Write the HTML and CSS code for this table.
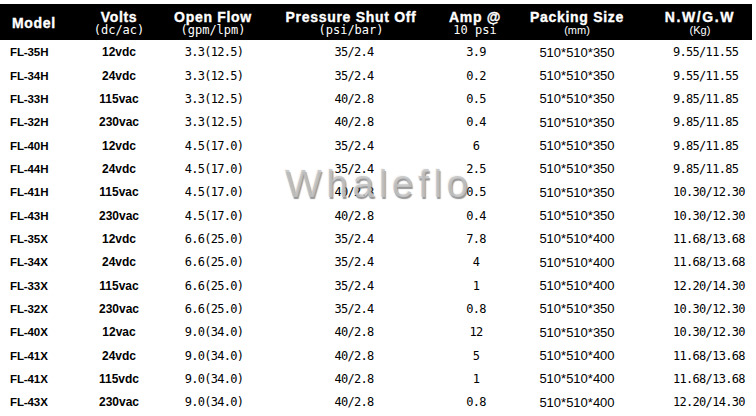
FILE: index.html
```html
<!DOCTYPE html>
<html>
<head>
<meta charset="utf-8">
<link rel="stylesheet" href="styles.css">
</head>
<body>
<div class="sheet">
  <div class="grid">
    <div class="th model"><span class="h1">Model</span></div>
    <div class="th"><span class="h1">Volts</span><span class="h2">(dc/ac)</span></div>
    <div class="th"><span class="h1">Open Flow</span><span class="h2">(gpm/lpm)</span></div>
    <div class="th"><span class="h1">Pressure Shut Off</span><span class="h2">(psi/bar)</span></div>
    <div class="th"><span class="h1">Amp @</span><span class="h2">10 psi</span></div>
    <div class="th"><span class="h1">Packing Size</span><span class="h2 sm">(mm)</span></div>
    <div class="th"><span class="h1 wide">N.W/G.W</span><span class="h2 sm">(Kg)</span></div>

    <div class="td c-model">FL-35H</div><div class="td c-volt">12vdc</div><div class="td c-flow">3.3(12.5)</div><div class="td c-pres">35/2.4</div><div class="td c-amp">3.9</div><div class="td c-pack">510*510*350</div><div class="td c-nw">9.55/11.55</div>
    <div class="td c-model">FL-34H</div><div class="td c-volt">24vdc</div><div class="td c-flow">3.3(12.5)</div><div class="td c-pres">35/2.4</div><div class="td c-amp">0.2</div><div class="td c-pack">510*510*350</div><div class="td c-nw">9.55/11.55</div>
    <div class="td c-model">FL-33H</div><div class="td c-volt">115vac</div><div class="td c-flow">3.3(12.5)</div><div class="td c-pres">40/2.8</div><div class="td c-amp">0.5</div><div class="td c-pack">510*510*350</div><div class="td c-nw">9.85/11.85</div>
    <div class="td c-model">FL-32H</div><div class="td c-volt">230vac</div><div class="td c-flow">3.3(12.5)</div><div class="td c-pres">40/2.8</div><div class="td c-amp">0.4</div><div class="td c-pack">510*510*350</div><div class="td c-nw">9.85/11.85</div>
    <div class="td c-model">FL-40H</div><div class="td c-volt">12vdc</div><div class="td c-flow">4.5(17.0)</div><div class="td c-pres">35/2.4</div><div class="td c-amp">6</div><div class="td c-pack">510*510*350</div><div class="td c-nw">9.85/11.85</div>
    <div class="td c-model">FL-44H</div><div class="td c-volt">24vdc</div><div class="td c-flow">4.5(17.0)</div><div class="td c-pres">35/2.4</div><div class="td c-amp">2.5</div><div class="td c-pack">510*510*350</div><div class="td c-nw">9.85/11.85</div>
    <div class="td c-model">FL-41H</div><div class="td c-volt">115vac</div><div class="td c-flow">4.5(17.0)</div><div class="td c-pres">40/2.8</div><div class="td c-amp">0.5</div><div class="td c-pack">510*510*350</div><div class="td c-nw">10.30/12.30</div>
    <div class="td c-model">FL-43H</div><div class="td c-volt">230vac</div><div class="td c-flow">4.5(17.0)</div><div class="td c-pres">40/2.8</div><div class="td c-amp">0.4</div><div class="td c-pack">510*510*350</div><div class="td c-nw">10.30/12.30</div>
    <div class="td c-model">FL-35X</div><div class="td c-volt">12vdc</div><div class="td c-flow">6.6(25.0)</div><div class="td c-pres">35/2.4</div><div class="td c-amp">7.8</div><div class="td c-pack">510*510*400</div><div class="td c-nw">11.68/13.68</div>
    <div class="td c-model">FL-34X</div><div class="td c-volt">24vdc</div><div class="td c-flow">6.6(25.0)</div><div class="td c-pres">35/2.4</div><div class="td c-amp">4</div><div class="td c-pack">510*510*400</div><div class="td c-nw">11.68/13.68</div>
    <div class="td c-model">FL-33X</div><div class="td c-volt">115vac</div><div class="td c-flow">6.6(25.0)</div><div class="td c-pres">35/2.4</div><div class="td c-amp">1</div><div class="td c-pack">510*510*400</div><div class="td c-nw">12.20/14.30</div>
    <div class="td c-model">FL-32X</div><div class="td c-volt">230vac</div><div class="td c-flow">6.6(25.0)</div><div class="td c-pres">35/2.4</div><div class="td c-amp">0.8</div><div class="td c-pack">510*510*350</div><div class="td c-nw">10.30/12.30</div>
    <div class="td c-model">FL-40X</div><div class="td c-volt">12vac</div><div class="td c-flow">9.0(34.0)</div><div class="td c-pres">40/2.8</div><div class="td c-amp">12</div><div class="td c-pack">510*510*350</div><div class="td c-nw">10.30/12.30</div>
    <div class="td c-model">FL-41X</div><div class="td c-volt">24vdc</div><div class="td c-flow">9.0(34.0)</div><div class="td c-pres">40/2.8</div><div class="td c-amp">5</div><div class="td c-pack">510*510*400</div><div class="td c-nw">11.68/13.68</div>
    <div class="td c-model">FL-41X</div><div class="td c-volt">115vdc</div><div class="td c-flow">9.0(34.0)</div><div class="td c-pres">40/2.8</div><div class="td c-amp">1</div><div class="td c-pack">510*510*400</div><div class="td c-nw">11.68/13.68</div>
    <div class="td c-model">FL-43X</div><div class="td c-volt">230vac</div><div class="td c-flow">9.0(34.0)</div><div class="td c-pres">40/2.8</div><div class="td c-amp">0.8</div><div class="td c-pack">510*510*400</div><div class="td c-nw">12.20/14.30</div>
  </div>
  <span class="watermark">Whaleflo</span>
</div>
</body>
</html>
```
FILE: styles.css
```css
html, body {
  margin: 0;
  padding: 0;
  background: #fff;
}
body {
  width: 756px;
  height: 416px;
  overflow: hidden;
  font-family: "Liberation Sans", Arial, sans-serif;
  color: #000;
}
.sheet {
  position: relative;
  padding-top: 4px;
}
.grid {
  display: grid;
  grid-template-columns: 70px 98px 90px 186px 62px 142px 104px;
  grid-template-rows: 36px;
  grid-auto-rows: 23.35px;
  width: 752px;
}
.th {
  background: #000;
  color: #fff;
  display: flex;
  flex-direction: column;
  align-items: center;
  justify-content: center;
  padding-top: 3px;
}
.th.model {
  align-items: flex-start;
  padding-left: 12px;
}
.h1 {
  font-weight: bold;
  font-size: 14px;
  line-height: 13px;
  letter-spacing: 0.7px;
  -webkit-text-stroke: 0.35px #fff;
}
.h1.wide {
  letter-spacing: 1.6px;
}
.h2 {
  font-family: "DejaVu Sans Mono", monospace;
  font-size: 12px;
  line-height: 12px;
  letter-spacing: 0;
}
.h2.sm {
  font-family: "Liberation Sans", Arial, sans-serif;
  font-size: 11px;
}
.td {
  display: flex;
  align-items: center;
  justify-content: center;
  padding-top: 1px;
  white-space: nowrap;
}
.c-model {
  justify-content: flex-start;
  padding-left: 10px;
  font-weight: bold;
  font-size: 11.5px;
  letter-spacing: -0.1px;
}
.c-volt {
  font-weight: bold;
  font-size: 12px;
}
.c-flow, .c-pres, .c-amp, .c-nw {
  font-family: "DejaVu Sans Mono", monospace;
  font-size: 12px;
  letter-spacing: -0.7px;
}
.c-flow {
  padding-left: 2px;
}
.c-pres {
  padding-left: 6px;
}
.c-amp {
  padding-left: 2px;
}
.c-pack {
  font-size: 13px;
  justify-content: center;
  padding-left: 0;
}
.c-nw {
  justify-content: flex-start;
  padding-left: 25px;
}
.watermark {
  position: absolute;
  left: 285px;
  top: 162px;
  font-family: "Liberation Sans", Arial, sans-serif;
  font-size: 39px;
  letter-spacing: 4.5px;
  color: rgba(195, 195, 195, 0.85);
  text-shadow: 1px 2px 1px rgba(80, 80, 80, 0.6), -1px -1px 0 rgba(245, 245, 245, 0.8);
  pointer-events: none;
}
```
